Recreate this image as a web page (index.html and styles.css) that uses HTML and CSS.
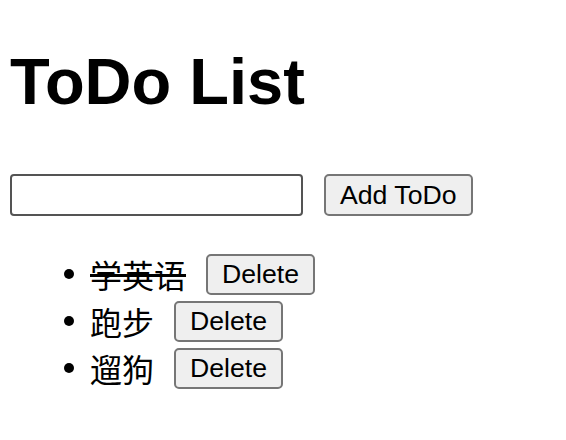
FILE: index.html
```html
<!DOCTYPE html>
<html lang="zh">
<head>
<meta charset="utf-8">
<title>ToDo List</title>
<link rel="stylesheet" href="styles.css">
</head>
<body>
  <h1 class="title">ToDo List</h1>
  <div class="add-row">
    <input class="todo-input" type="text">
    <button class="btn btn-add">Add ToDo</button>
  </div>
  <ul class="todo-list">
    <li class="todo-item"><span class="todo-text done">学英语</span><button class="btn btn-delete">Delete</button></li>
    <li class="todo-item"><span class="todo-text">跑步</span><button class="btn btn-delete">Delete</button></li>
    <li class="todo-item"><span class="todo-text">遛狗</span><button class="btn btn-delete">Delete</button></li>
  </ul>
</body>
</html>
```

FILE: styles.css
```css
html, body {
  background: #ffffff;
}
body {
  margin: 0;
  padding: 0 10px;
  font-family: "Liberation Sans", Arial, "Noto Sans CJK SC", sans-serif;
  color: #000;
}
.title {
  margin: 46px 0 0;
  font-size: 65px;
  font-weight: bold;
  line-height: 72px;
}
.add-row {
  display: flex;
  align-items: flex-start;
  gap: 21px;
  margin-top: 56px;
}
.todo-input {
  box-sizing: border-box;
  width: 293px;
  height: 42px;
  margin: 0;
  border: 2px solid #545454;
  border-radius: 4px;
  padding: 2px 4px;
  font-size: 26.67px;
  background: #fff;
}
.btn {
  box-sizing: border-box;
  margin: 0;
  font-family: "Liberation Sans", Arial, sans-serif;
  font-size: 26.67px;
  color: #000;
  background: #efefef;
  border: 2px solid #767676;
  border-radius: 5px;
  padding: 0 14px;
  height: 42px;
  line-height: 1;
}
.todo-list {
  margin: 33px 0 0;
  padding-left: 80px;
  font-family: "Liberation Sans", "Noto Sans CJK SC", sans-serif;
  font-size: 32px;
}
.todo-item {
  height: 47px;
  line-height: 47px;
}
.todo-text {
  font-family: "Noto Sans CJK SC", sans-serif;
  vertical-align: middle;
}
.todo-text.done {
  text-decoration: line-through;
}
.btn-delete {
  height: 41px;
  margin-left: 20px;
  vertical-align: middle;
}
```
